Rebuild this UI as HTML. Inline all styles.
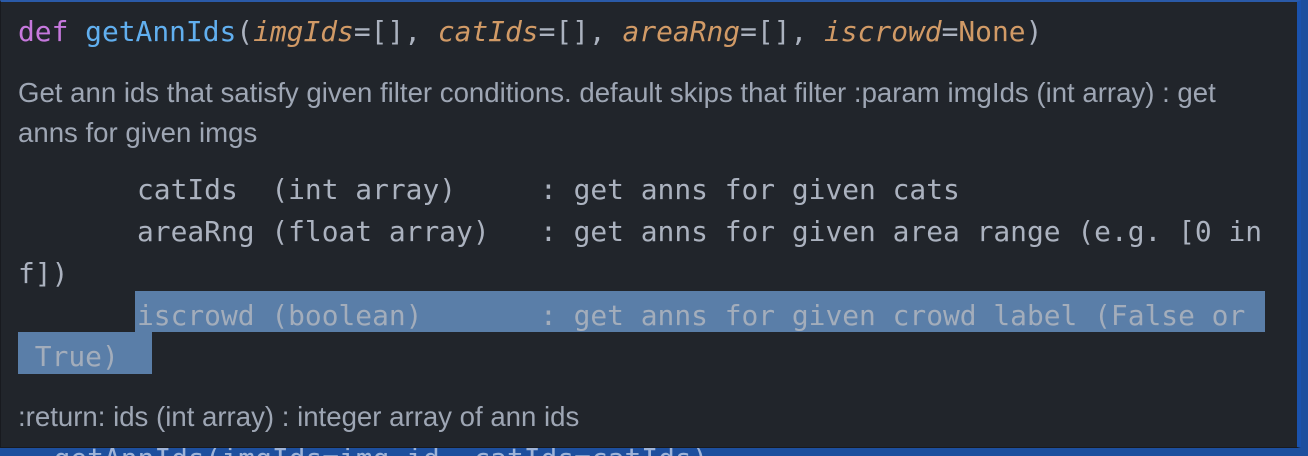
<!DOCTYPE html>
<html><head><style>
html,body{margin:0;padding:0;width:1308px;height:456px;overflow:hidden;background:#1d4f9e;}
.box{position:absolute;left:0;top:0;width:1296px;height:445px;background:#21252b;border:1px solid #181a1f;border-top:2px solid #2a5aa8;border-right:4px solid #1a52ad;z-index:2}
.m{font-family:"DejaVu Sans Mono","Liberation Mono",monospace;font-size:27.9px;white-space:pre;position:absolute;left:18px;color:#abb2bf;z-index:3}
.s{font-family:"Liberation Sans",sans-serif;font-size:27.6px;color:#9ea6b4;position:absolute;left:18px;white-space:pre;z-index:3}
.k{color:#c678dd}.f{color:#61afef}.p{color:#d19a66;font-style:italic}.o{color:#d19a66}
.hl{position:absolute;background:#5a7ea8;z-index:2}
.sel{color:#a3adbb}
.strip{position:absolute;left:0;top:448px;width:1308px;height:8px;background:#1d4f9e;overflow:hidden;z-index:1}
.strip .m{position:absolute;top:-6px;left:20px;color:#9fb4d8;z-index:1}
</style></head><body>
<div class="box"></div>
<div class="m" style="top:15px"><span class="k">def</span> <span class="f">getAnnIds</span>(<span class="p">imgIds</span>=[], <span class="p">catIds</span>=[], <span class="p">areaRng</span>=[], <span class="p">iscrowd</span>=<span class="o">None</span>)</div>
<div class="s" style="top:77px">Get ann ids that satisfy given filter conditions. default skips that filter :param imgIds (int array) : get</div>
<div class="s" style="top:117px">anns for given imgs</div>
<div class="m" style="top:173px;left:137px">catIds  (int array)     : get anns for given cats</div>
<div class="m" style="top:215px;left:137px">areaRng (float array)   : get anns for given area range (e.g. [0 in</div>
<div class="m" style="top:257px">f])</div>
<div class="hl" style="left:135px;top:291px;width:1130px;height:41px"></div>
<div class="hl" style="left:18px;top:332px;width:134px;height:42px"></div>
<div class="m sel" style="top:299px;left:137px">iscrowd (boolean)       : get anns for given crowd label (False or</div>
<div class="m sel" style="top:340px;left:18px"> True)</div>
<div class="s" style="top:401px">:return: ids (int array) : integer array of ann ids</div>
<div class="strip"><div class="m">  getAnnIds(imgIds=img_id, catIds=catIds)</div></div>
</body></html>
